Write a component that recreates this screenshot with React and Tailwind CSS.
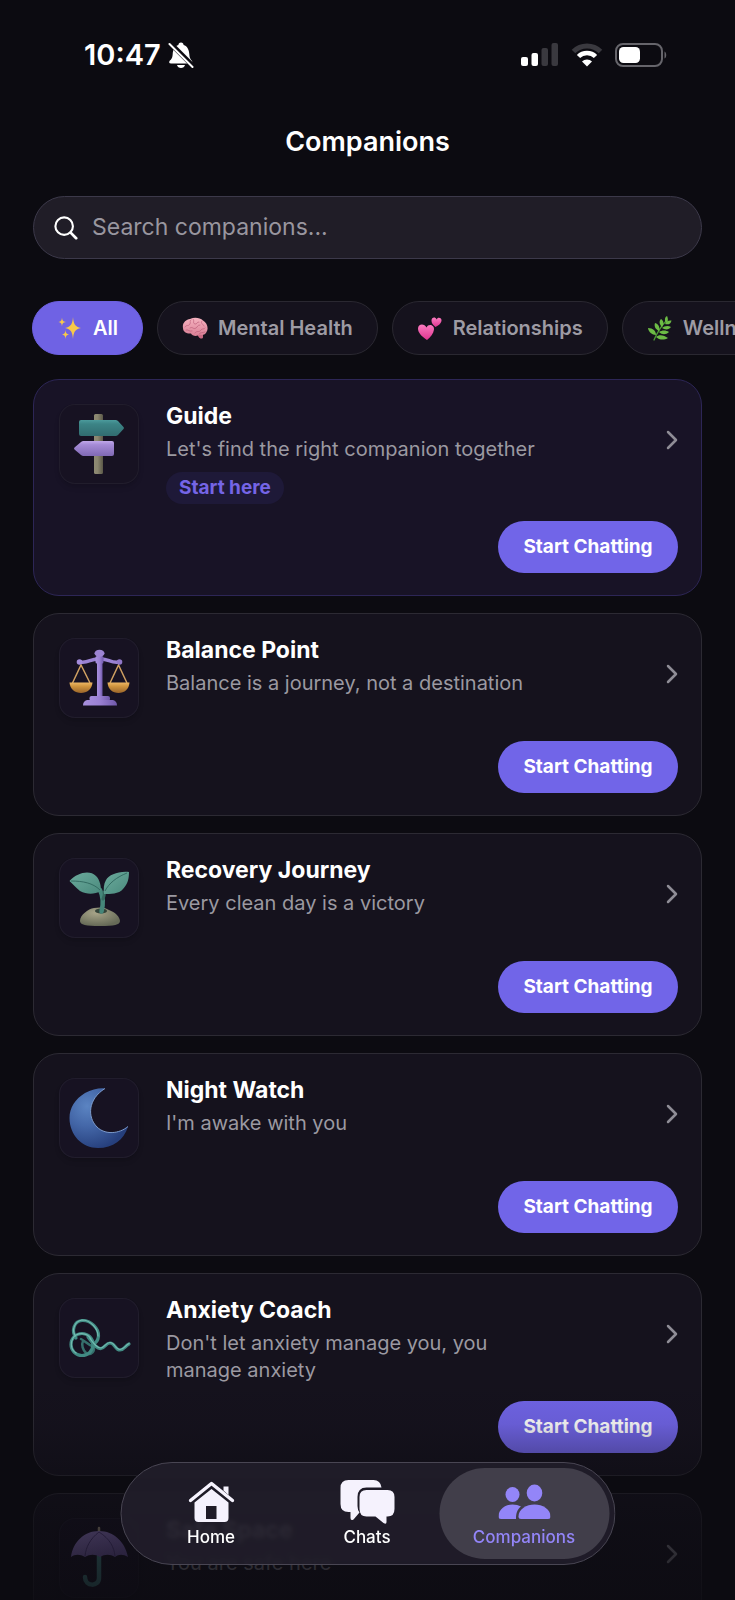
import React, { useState } from 'react';

const SparklesIcon = () => (
  <svg viewBox="0 0 26 26" className="size-[26px] shrink-0" aria-hidden="true">
    <path d="M16 2C16.6 9 18 11.800 24 13C18 14.200 16.600 17 16 24C15.400 17 14 14.200 8 13C14 11.800 15.400 9 16 2Z" fill="#f8c84a" />
    <path d="M5 2.500C5.300 5.500 6 6.500 9 7C6 7.500 5.300 8.500 5 11.500C4.700 8.500 4 7.500 1.500 7C4 6.500 4.700 5.500 5 2.500Z" fill="#f8c84a" />
    <path d="M8.500 15C8.800 18 9.500 19 12 19.500C9.500 20 8.800 21 8.500 24C8.200 21 7.500 20 5 19.500C7.500 19 8.200 18 8.500 15Z" fill="#f8c84a" />
  </svg>
);

const BrainIcon = () => (
  <svg viewBox="0 0 26 26" className="size-[26px] shrink-0" aria-hidden="true">
    <defs>
      <linearGradient id="brain" x1="0" y1="0" x2="0" y2="1">
        <stop offset="0" stopColor="#f6b3c0" />
        <stop offset="1" stopColor="#d97f95" />
      </linearGradient>
    </defs>
    <path d="M15 18C16 21 17 24 20 23.500C22 23 20.500 20 21 18Z" fill="#c96a83" />
    <path d="M1 13C0 8 4 4.500 8 4C12 2 18 2.500 21 5.500C25 8 27 13 24.500 17C23.500 20 20 20.500 17.500 19.500C15 22 10 21 9 18.500C5 19 1 17 1 13Z" fill="url(#brain)" />
    <path d="M3 12C5 9 6 12 8 9C9 7 7 6 9 5M11 4C13 6 10 8 13 9C15 10 15 6 17 7M8 13C11 11 11 15 14 13C16 12 15 10 18 10M20 6C18 8 21 9 22 11M4 15C6 14 7 17 10 16M13 18C15 15 17 18 19 15C20 13 22 15 23 13M17 19C18 17 21 18 23 17" fill="none" stroke="#b95c77" strokeWidth="0.8" strokeLinecap="round" opacity="0.8" />
  </svg>
);

const HeartsIcon = () => (
  <svg viewBox="0 0 26 26" className="size-[26px] shrink-0" aria-hidden="true">
    <defs>
      <linearGradient id="hearts" x1="0" y1="0" x2="0" y2="1">
        <stop offset="0" stopColor="#fb7cc0" />
        <stop offset="1" stopColor="#e0338f" />
      </linearGradient>
    </defs>
    <path d="M10 25C4 21 1 17.500 1 13.500C1 8.500 7.500 8 9.500 12.500C11 8.500 17.500 9.500 17 14.500C16.500 18.500 13.500 22 10 25Z" fill="url(#hearts)" />
    <path d="M18.500 12C15.500 9.500 14.500 8 14.500 5.500C14.500 2 18.500 1.500 19.500 4.500C21 1.500 25 3 24.500 6C24 8.500 21.500 10.500 18.500 12Z" fill="url(#hearts)" />
  </svg>
);

const HerbIcon = () => (
  <svg viewBox="0 0 26 26" className="size-[26px] shrink-0" aria-hidden="true">
    <path d="M7 25C10 18 14 11 20 5" fill="none" stroke="#4c9a35" strokeWidth="1.300" strokeLinecap="round" />
    <g fill="#6cbb45">
      <path d="M19 8C17 5 18 2 20 1C21 3 21.500 6 19 8Z" />
      <path d="M15 12C12 9 12 6 14 4C17 6 17 9 15 12Z" />
      <path d="M12 16C8 14 7 11 8 8C12 9 13 13 12 16Z" />
      <path d="M9 20C5 20 1.500 17 1 13C6 13 9 16 9 20Z" />
      <path d="M18 9C19 6 22 5 24.500 5.500C24 9 21 10 18 9Z" />
      <path d="M15 13C17 11 21 10 24 12C22 15 18 15 15 13Z" />
      <path d="M12 17C15 15 19 15 22 17C19 20 15 20 12 17Z" />
      <path d="M9 22C12 19 17 20 21 23C17 25.500 12 25 9 22Z" />
    </g>
  </svg>
);

const SignpostArt = () => (
  <svg viewBox="0 0 80 80" className="size-20" aria-hidden="true">
    <defs>
      <linearGradient id="post" x1="0" y1="0" x2="1" y2="0">
        <stop offset="0" stopColor="#8e8a73" />
        <stop offset="0.4" stopColor="#8a866f" />
        <stop offset="1" stopColor="#5b5848" />
      </linearGradient>
      <linearGradient id="signTeal" x1="0" y1="0" x2="0" y2="1">
        <stop offset="0" stopColor="#4b9b9c" />
        <stop offset="0.25" stopColor="#3c8486" />
        <stop offset="1" stopColor="#316c70" />
      </linearGradient>
      <linearGradient id="signPurple" x1="0" y1="0" x2="0" y2="1">
        <stop offset="0" stopColor="#c0a8ea" />
        <stop offset="0.25" stopColor="#a58bd6" />
        <stop offset="1" stopColor="#8069b4" />
      </linearGradient>
    </defs>
    <rect x="35" y="10" width="9" height="60" rx="1.500" fill="url(#post)" />
    <path d="M22 16H56.500Q58 16 59 17L64.500 23Q65.500 24 64.500 25L59 31Q58 32 56.500 32H22Q20 32 20 30V18Q20 16 22 16Z" fill="url(#signTeal)" />
    <path d="M53 37H24.500Q23 37 22 38L15.500 43.500Q14.500 44.500 15.500 45.500L22 51Q23 52 24.500 52H53Q55 52 55 50V39Q55 37 53 37Z" fill="url(#signPurple)" />
  </svg>
);

const ScalesArt = () => (
  <svg viewBox="0 0 80 80" className="size-20" aria-hidden="true">
    <defs>
      <linearGradient id="scalePurple" x1="0" y1="0" x2="1" y2="0">
        <stop offset="0" stopColor="#a890de" />
        <stop offset="0.5" stopColor="#9a80d2" />
        <stop offset="1" stopColor="#7059ab" />
      </linearGradient>
      <linearGradient id="bowl" x1="0" y1="0" x2="0" y2="1">
        <stop offset="0" stopColor="#edb765" />
        <stop offset="0.35" stopColor="#d1963f" />
        <stop offset="1" stopColor="#99642a" />
      </linearGradient>
    </defs>
    <path d="M13.500 45L22 27L31 45M51 45L59.500 27L68 45" fill="none" stroke="#cfa062" strokeWidth="1.500" />
    <path d="M21 24C29 26 32 20 40.500 21C49 20 52 26 60.500 24" fill="none" stroke="#9a82d2" strokeWidth="3.500" strokeLinecap="round" />
    <circle cx="20.500" cy="24" r="2.800" fill="#a48cdd" />
    <circle cx="60.500" cy="24" r="2.800" fill="#9077c8" />
    <rect x="38" y="22" width="5.500" height="38" fill="url(#scalePurple)" />
    <rect x="36.500" y="18" width="8" height="7.500" rx="1.500" fill="url(#scalePurple)" />
    <ellipse cx="40.500" cy="15.300" rx="5" ry="3.500" fill="#9c84d3" />
    <rect x="30.500" y="58" width="20.500" height="5" rx="2" fill="url(#scalePurple)" />
    <path d="M28 62H54Q58 63 58 67.500H24Q24 63 28 62Z" fill="url(#scalePurple)" />
    <path d="M10.500 44.500H33.500C33 51 28 55 22 55C16 55 11 51 10.500 44.500Z" fill="url(#bowl)" />
    <path d="M48.500 44.500H70.500C70 51 65.500 55 59.500 55C53.500 55 49 51 48.500 44.500Z" fill="url(#bowl)" />
  </svg>
);

const SproutArt = () => (
  <svg viewBox="0 0 80 80" className="size-20" aria-hidden="true">
    <defs>
      <linearGradient id="leaf" x1="0" y1="0" x2="1" y2="1">
        <stop offset="0" stopColor="#6cab9d" />
        <stop offset="1" stopColor="#4a8a7d" />
      </linearGradient>
      <radialGradient id="mound" cx="0.4" cy="0.3" r="0.7">
        <stop offset="0" stopColor="#a8a589" />
        <stop offset="1" stopColor="#666a57" />
      </radialGradient>
    </defs>
    <path d="M21 63C21 57 29 51 35 50C40 49 46 49 50 52C56 54 61 59 61 63C61 67 55 68 41 68C27 68 21 67 21 63Z" fill="url(#mound)" />
    <ellipse cx="42" cy="53" rx="6" ry="2.500" fill="#34443a" />
    <path d="M41 32C44 38 44.500 46 42.500 53.500" fill="none" stroke="#458679" strokeWidth="4.500" strokeLinecap="round" />
    <path d="M45 34C46 36 45 38 44 41" fill="none" stroke="#35695f" strokeWidth="3" strokeLinecap="round" />
    <path d="M10.500 23C19 14 31 12 37 18C41 22 42 28 42 33C35 36.500 28 36.500 21 33C17 30 14 26 10.500 23Z" fill="url(#leaf)" />
    <path d="M70 14C59 13 50 17 47 22C44.500 26 44.500 31 45 36C51 36 60 36 64 31C69 26 70 20 70 14Z" fill="url(#leaf)" />
    <path d="M12 23C24 23 34 25 41 32M68 15C58 19 50 25 46 33" fill="none" stroke="#2f675d" strokeWidth="0.9" />
  </svg>
);

const MoonArt = () => (
  <svg viewBox="0 0 80 80" className="size-20" aria-hidden="true">
    <defs>
      <radialGradient id="moon" cx="0.3" cy="0.3" r="0.75">
        <stop offset="0" stopColor="#5b84c2" />
        <stop offset="0.45" stopColor="#4467a8" />
        <stop offset="1" stopColor="#263f7c" />
      </radialGradient>
    </defs>
    <path d="M46 10.500C42 9.500 33 11 26 15C16 21 10.500 30 10.500 40C10.500 57 23 70 39 70C54 70 65 62 69 48.500C60 56 46 57 38 49C28 39 29 21 46 10.500Z" fill="url(#moon)" />
    <path d="M69 48.500C60 56 46 57 38 49C28 39 29 21 46 10.500" fill="none" stroke="#86a6d8" strokeWidth="0.9" />
  </svg>
);

const TangleArt = () => (
  <svg viewBox="0 0 80 80" className="size-20" aria-hidden="true">
    <g fill="none" strokeLinecap="round" strokeLinejoin="round">
      <path d="M22 41C26 43 29 47 35 49M24 43C22 47 24 52 27 55" stroke="#356f6b" strokeWidth="2.500" />
      <path d="M27 56C33 57 36 53 34.500 49" stroke="#356f6b" strokeWidth="2.500" />
      <g stroke="#418a83" strokeWidth="3.200">
        <path d="M17 40C12 33 15 23 23 22.500C32 22 40 31 39.500 38C39 43 37 45 34 46" />
        <circle cx="23" cy="46.500" r="11" />
        <path d="M29 39C34 45 37 51 42 50.500C46 50 47 45 51 45C56 45 56 52 61 52C65 52 66 48 70 46" />
      </g>
      <g stroke="#72bbb0" strokeWidth="1.200">
        <path d="M16.500 38C12 32 16 23 23 22C32 22 39 31 39 38" />
        <path d="M32 41C28 34 18 34 14 40C11 45 12 52 17 55" />
        <path d="M31 40.500C35 46 38 50 42 50C46 49 47 44.500 51 44.500C56 44.500 56 51.500 61 51.500C65 51.500 66 47.500 70 45.500" />
      </g>
    </g>
  </svg>
);

const UmbrellaArt = () => (
  <svg viewBox="0 0 80 80" className="size-20" aria-hidden="true">
    <defs>
      <linearGradient id="canopy" x1="0" y1="0" x2="1" y2="1">
        <stop offset="0" stopColor="#b195ea" />
        <stop offset="1" stopColor="#7a5fb6" />
      </linearGradient>
    </defs>
    <path d="M40 38V60C40 69 26 69 26 59" fill="none" stroke="#4b9a96" strokeWidth="4.500" strokeLinecap="round" />
    <path d="M40 10V15" stroke="#b6a88f" strokeWidth="2.500" strokeLinecap="round" />
    <path d="M12 39C14 24 25 13 40 13C55 13 66 24 69 39C64 36 60 36 56 39C51 36 46 36 41 39C36 36 31 36 26 39C21 36 16 36 12 39Z" fill="url(#canopy)" />
    <path d="M40 14C31 21 27 29 26 38M40 14C51 21 55 29 56 38" fill="none" stroke="#5b438f" strokeWidth="1" />
  </svg>
);

const HomeIcon = () => (
  <svg viewBox="0 0 46 42" className="h-[42px] w-[46px]" aria-hidden="true">
    <path d="M35 5.500H40V14L35 9.500Z" fill="#f5f2fd" />
    <path d="M2 19.500L23 2.500L44 19.500" fill="none" stroke="#f5f2fd" strokeWidth="3.500" strokeLinecap="round" strokeLinejoin="round" />
    <path fillRule="evenodd" d="M6 21.500L23 8L40 21.500V37Q40 41 36 41H10Q6 41 6 37ZM17.500 25V38H28V25Z" fill="#f5f2fd" />
  </svg>
);

const ChatsIcon = () => (
  <svg viewBox="0 0 56 46" className="h-[46px] w-14" aria-hidden="true">
    <path d="M9 1H34Q41 1 42 8.500H27Q18 8.500 18 18V27Q18 31 20 33.500L14 40.500Q11 42 11 39V33H9Q1 33 1 25V9Q1 1 9 1Z" fill="#f5f2fd" />
    <path d="M27 11H48Q55 11 55 18V30Q55 37.500 48 37.500H47V43Q47 46 44 44L36 37.500H27Q20 37.500 20 30V18Q20 11 27 11Z" fill="#f5f2fd" />
  </svg>
);

const CompanionsIcon = () => (
  <svg viewBox="0 0 52 36" className="h-9 w-[52px]" aria-hidden="true">
    <g fill="#9385f8">
      <ellipse cx="14" cy="10.500" rx="7" ry="7.500" />
      <ellipse cx="36" cy="9" rx="7.800" ry="8.500" />
      <path d="M22.500 22.500C19 25 17.500 29 17.500 35H2.500Q0 35 0 32.500C0 25 7 20.500 14 20.500Q19 20.500 22.500 22.500Z" />
      <path d="M22.500 35Q20 35 20 32.500C20 25 28 20.500 36 20.500C44 20.500 52 25 52 32.500Q52 35 49.500 35Z" />
    </g>
  </svg>
);

const BellOffIcon = () => (
  <svg viewBox="0 0 26 26" className="size-[26px]" aria-hidden="true">
    <g fill="#fff">
      <path d="M13 0.500C14.700 0.500 15.500 1.500 15.600 3C19.500 4.200 21 8 21.300 12C21.500 16 22.500 17 24 19Q25 21.500 22.500 21.500H3Q0.500 21.500 1.500 19C3.500 17 4.500 16 4.700 12C5 8 6.500 4.200 10.400 3C10.500 1.500 11.300 0.500 13 0.500Z" />
      <path d="M9 23H17C16.500 25 15 26 13 26C11 26 9.500 25 9 23Z" />
    </g>
    <path d="M2 1L25 24" stroke="#0d0c12" strokeWidth="5" />
    <path d="M1.500 2L24.500 25" stroke="#fff" strokeWidth="2" strokeLinecap="round" />
  </svg>
);

const StatusBar = () => (
  <div className="flex h-[108px] shrink-0 items-center justify-between pl-[84px] pr-[68px] pt-0.5">
    <div className="flex items-center gap-[7px]">
      <span className="text-[29px] font-semibold leading-9 text-white">10:47</span>
      <BellOffIcon />
    </div>
    <div className="flex items-center gap-3">
      <svg viewBox="0 0 38 24" className="h-6 w-[38px]" aria-hidden="true">
        <rect x="0" y="14" width="7" height="9" rx="2" fill="#fff" />
        <rect x="10.500" y="10" width="6.500" height="13" rx="2" fill="#fff" />
        <rect x="20.500" y="5" width="6.500" height="18" rx="2" fill="#3a393f" />
        <rect x="30.500" y="0" width="6.500" height="23" rx="2" fill="#3a393f" />
      </svg>
      <svg viewBox="0 0 32 24" className="h-6 w-8" aria-hidden="true">
        <path d="M2.500 8.500C10 1 22 1 29.500 8.500" fill="none" stroke="#3a393f" strokeWidth="5" />
        <path d="M7.500 13.500C12 8.800 20 8.800 24.500 13.500" fill="none" stroke="#fff" strokeWidth="4.500" />
        <path d="M16 23.500L11 18.500C13.500 15.800 18.500 15.800 21 18.500Z" fill="#fff" />
      </svg>
      <svg viewBox="0 0 52 24" className="h-6 w-[52px]" aria-hidden="true">
        <rect x="1" y="1" width="46" height="22" rx="7" fill="none" stroke="#66656b" strokeWidth="2" />
        <rect x="4" y="4" width="21" height="16" rx="4.500" fill="#fff" />
        <path d="M49.500 8.500C51.800 9.500 51.800 14.500 49.500 15.500Z" fill="#66656b" />
      </svg>
    </div>
  </div>
);

const categories = [
  { label: 'All', Icon: SparklesIcon },
  { label: 'Mental Health', Icon: BrainIcon },
  { label: 'Relationships', Icon: HeartsIcon },
  { label: 'Wellness', Icon: HerbIcon }
];

const companions = [
  { name: 'Guide', tagline: "Let's find the right companion together", Art: SignpostArt, badge: 'Start here' },
  { name: 'Balance Point', tagline: 'Balance is a journey, not a destination', Art: ScalesArt },
  { name: 'Recovery Journey', tagline: 'Every clean day is a victory', Art: SproutArt },
  { name: 'Night Watch', tagline: "I'm awake with you", Art: MoonArt },
  { name: 'Anxiety Coach', tagline: "Don't let anxiety manage you, you manage anxiety", Art: TangleArt },
  { name: 'Safe Space', tagline: 'You are safe here', Art: UmbrellaArt }
];

const tabs = [
  { label: 'Home', Icon: HomeIcon },
  { label: 'Chats', Icon: ChatsIcon },
  { label: 'Companions', Icon: CompanionsIcon }
];

const CompanionCard = ({ companion }) => {
  const { name, tagline, Art, badge } = companion;

  return (
    <li
      className={`shrink-0 rounded-[26px] border pb-[22px] pl-[25px] pr-[23px] pt-6 ${
        badge ? 'border-[#2d2656] bg-[#181326]' : 'border-[#2c2a33] bg-[#15121d]'
      }`}
    >
      <div className="flex min-h-[86px] items-start">
        <div className="size-20 shrink-0 overflow-hidden rounded-2xl bg-[#171222] shadow-md inset-ring inset-ring-[#211d2c]">
          <Art />
        </div>
        <div className="ml-[27px] mr-28 min-w-0 flex-1">
          <h2 className="text-[23px] font-bold leading-6 text-white">{name}</h2>
          <p className="mt-2 text-xl leading-[27px] text-[#9b99a1]">{tagline}</p>
          {badge && (
            <span className="mt-[9px] flex h-8 w-fit items-center rounded-full bg-[#1e1938] px-[13px] text-[19px] font-bold text-[#7565e6]">
              {badge}
            </span>
          )}
        </div>
        <button type="button" aria-label={`Open ${name}`} className="mt-[26px]">
          <svg viewBox="0 0 12 20" className="h-5 w-3" fill="none" stroke="#8f8d96" strokeWidth="2.500" strokeLinecap="round" strokeLinejoin="round" aria-hidden="true">
            <path d="M2 2L10 10L2 18" />
          </svg>
        </button>
      </div>
      <div className="mt-[17px] flex justify-end">
        <button type="button" className="h-[52px] w-[180px] rounded-full bg-[#7165e8] text-[19px] font-bold text-white">
          Start Chatting
        </button>
      </div>
    </li>
  );
};

const TabBar = ({ active, onChange }) => (
  <nav className="absolute bottom-[35px] left-1/2 flex h-[103px] w-[495px] max-w-full -translate-x-1/2 rounded-full border border-[#494653] bg-[#221f2b]/85 py-[5px] pl-3 pr-[5px] backdrop-blur-[2px]">
    {tabs.map(({ label, Icon }) => (
      <button
        key={label}
        type="button"
        onClick={() => onChange(label)}
        className={`flex w-[156px] flex-col items-center rounded-full pt-[11px] text-[17px] font-medium leading-6 last:-ml-1.5 last:w-[170px] ${
          active === label ? 'bg-[#413e4a] text-[#9385f8]' : 'text-white'
        }`}
      >
        <span className="flex h-[46px] items-center justify-center">
          <Icon />
        </span>
        {label}
      </button>
    ))}
  </nav>
);

export default function App() {
  const [query, setQuery] = useState('');
  const [category, setCategory] = useState('All');
  const [tab, setTab] = useState('Companions');

  return (
    <div className="relative flex h-screen flex-col overflow-hidden bg-[#0c0b11] font-['Inter',sans-serif]">
      <StatusBar />
      <h1 className="shrink-0 pb-7 pt-4 text-center text-[27px] font-semibold leading-9 text-white">Companions</h1>

      <div className="shrink-0 px-[33px] pt-2">
        <label className="flex h-[63px] items-center gap-3.5 rounded-full border border-[#3c394a] bg-[#201d27] px-5">
          <svg viewBox="0 0 26 26" className="size-6 shrink-0" fill="none" stroke="#fff" strokeLinecap="round" aria-hidden="true">
            <circle cx="11" cy="11" r="9.500" strokeWidth="2.300" />
            <path d="M18 18L24 24" strokeWidth="3" />
          </svg>
          <input
            type="text"
            aria-label="Search companions"
            placeholder="Search companions..."
            value={query}
            onChange={(e) => setQuery(e.target.value)}
            className="min-w-0 flex-1 bg-transparent text-[23px] text-white outline-none placeholder:text-[#99969f]"
          />
        </label>
      </div>

      <div className="mt-[42px] flex shrink-0 gap-3.5 overflow-hidden pl-8">
        {categories.map(({ label, Icon }) => (
          <button
            key={label}
            type="button"
            onClick={() => setCategory(label)}
            className={`flex h-[54px] shrink-0 items-center gap-2.5 rounded-full border px-6 text-xl font-semibold ${
              category === label
                ? 'border-[#6d60e0] bg-[#6f62e4] text-white'
                : 'border-[#2a2831] bg-[#15121d] text-[#9e9ba4]'
            }`}
          >
            <Icon />
            {label}
          </button>
        ))}
      </div>

      <ul className="mt-6 flex min-h-0 flex-1 flex-col gap-[17px] overflow-y-auto px-[33px] [scrollbar-width:none]">
        {companions.map((companion) => (
          <CompanionCard key={companion.name} companion={companion} />
        ))}
      </ul>

      {/* the list fades out behind the tab bar */}
      <div className="pointer-events-none absolute inset-x-0 bottom-0 h-[220px] bg-[linear-gradient(to_bottom,#0c0b1100_0%,#0c0b1118_20%,#0c0b1170_42%,#0c0b11a8_65%,#0c0b11d8_100%)]"></div>
      <TabBar active={tab} onChange={setTab} />
    </div>
  );
}
